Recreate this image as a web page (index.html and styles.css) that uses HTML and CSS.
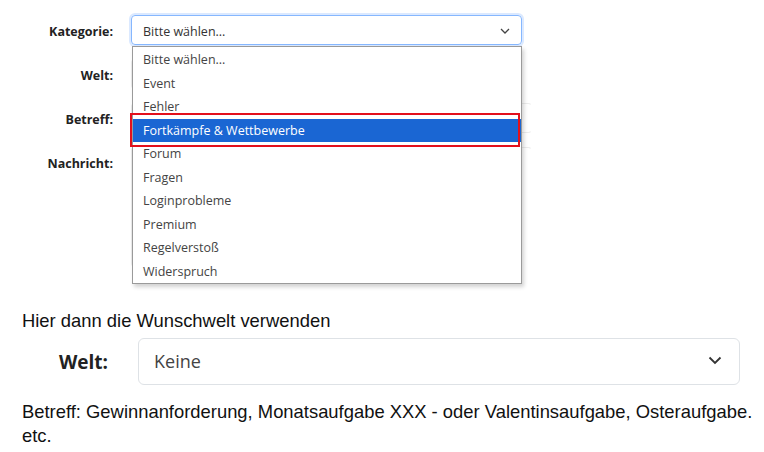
FILE: index.html
```html
<!DOCTYPE html>
<html lang="de">
<head>
<meta charset="utf-8">
<title>Kategorie</title>
<link rel="stylesheet" href="styles.css">
</head>
<body>
<div class="shot">
  <div class="form">
    <div class="row row-kat">
      <label class="lbl">Kategorie:</label>
      <div class="ctl">
        <div class="select focus">
          <span>Bitte wählen...</span>
          <svg class="chev" width="10" height="6" viewBox="0 0 10 6"><path d="M1 1l4 4 4-4" fill="none" stroke="#444" stroke-width="1.3"/></svg>
        </div>
        <ul class="list">
          <li>Bitte wählen...</li>
          <li>Event</li>
          <li>Fehler</li>
          <li class="sel">Fortkämpfe &amp; Wettbewerbe</li>
          <li>Forum</li>
          <li>Fragen</li>
          <li>Loginprobleme</li>
          <li>Premium</li>
          <li>Regelverstoß</li>
          <li>Widerspruch</li>
        </ul>
        <div class="mark"></div>
      </div>
    </div>
    <div class="row"><label class="lbl">Welt:</label><div class="ctl"><div class="field"></div></div></div>
    <div class="row"><label class="lbl">Betreff:</label><div class="ctl"><div class="field wide"></div></div></div>
    <div class="row"><label class="lbl">Nachricht:</label><div class="ctl"><div class="field wide tall"></div></div></div>
  </div>

  <div class="notes">
    <p class="txt first">Hier dann die Wunschwelt verwenden</p>
    <div class="welt">
      <span class="wlbl">Welt:</span>
      <div class="bigselect">
        <span>Keine</span>
        <svg width="14" height="9" viewBox="0 0 14 9"><path d="M1.5 1.5l5.5 5.5 5.5-5.5" fill="none" stroke="#333" stroke-width="1.8"/></svg>
      </div>
    </div>
    <p class="txt">Betreff: Gewinnanforderung, Monatsaufgabe XXX - oder Valentinsaufgabe, Osteraufgabe.<br>etc.</p>
  </div>
</div>
</body>
</html>
```

FILE: styles.css
```css
* { box-sizing: border-box; }
html, body { margin: 0; padding: 0; background: #fff; }
body { width: 764px; height: 452px; overflow: hidden; }

.shot { padding-top: 15px; }

.form {
  display: flex;
  flex-direction: column;
  gap: 14px;
  font-family: "Open Sans", "Noto Sans", sans-serif;
  font-size: 12.5px;
  color: #212529;
}
.row {
  display: flex;
  align-items: flex-start;
  height: 30px;
}
.lbl {
  width: 113px;
  text-align: right;
  font-weight: 700;
  line-height: 30px;
  padding-top: 2px;
  color: #222;
}
.ctl {
  margin-left: 18px;
  position: relative;
}
.select {
  width: 391px;
  height: 30px;
  border: 1px solid #86b7fe;
  border-radius: 4px;
  box-shadow: 0 0 0 2px rgba(13,110,253,0.15);
  display: flex;
  align-items: center;
  justify-content: space-between;
  padding: 2px 11px 0 11px;
  color: #333;
}
.field {
  width: 391px;
  height: 30px;
  border: 1px solid #ececec;
  border-right-color: transparent;
  border-radius: 4px;
}
.field.wide { width: 401px; }
.field.tall {
  height: 120px;
  border-bottom-color: transparent;
}

.list {
  position: absolute;
  top: 31px;
  left: 1px;
  width: 390px;
  margin: 0;
  padding: 1px 0 0 0;
  list-style: none;
  background: #fff;
  border: 1px solid #9a9a9a;
  box-shadow: 2px 3px 4px rgba(0,0,0,0.18);
  z-index: 2;
  color: #444;
}
.list li {
  height: 23.5px;
  line-height: 23.5px;
  padding-left: 10px;
  white-space: nowrap;
}
.list li.sel {
  background: #1a66d3;
  color: #fff;
}
.mark {
  position: absolute;
  top: 98px;
  left: -1px;
  width: 390px;
  height: 34px;
  border: 2px solid #e3101c;
  z-index: 3;
}

.notes {
  margin-top: 132px;
  padding-left: 22px;
  font-family: "Liberation Sans", Arial, sans-serif;
  font-size: 18.4px;
  color: #111;
}
.txt {
  margin: 0;
  line-height: 24px;
}
.welt {
  display: flex;
  align-items: center;
  margin: 5px 0 15px 0;
  font-family: "Open Sans", "Noto Sans", sans-serif;
  font-size: 18px;
}
.wlbl {
  width: 86px;
  text-align: right;
  font-weight: 700;
  font-size: 19px;
  color: #222;
}
.bigselect {
  margin-left: 30px;
  width: 602px;
  height: 47px;
  border: 1px solid #dee2e6;
  border-radius: 6px;
  display: flex;
  align-items: center;
  justify-content: space-between;
  padding: 0 17px 2px 15px;
  color: #444;
}
```
